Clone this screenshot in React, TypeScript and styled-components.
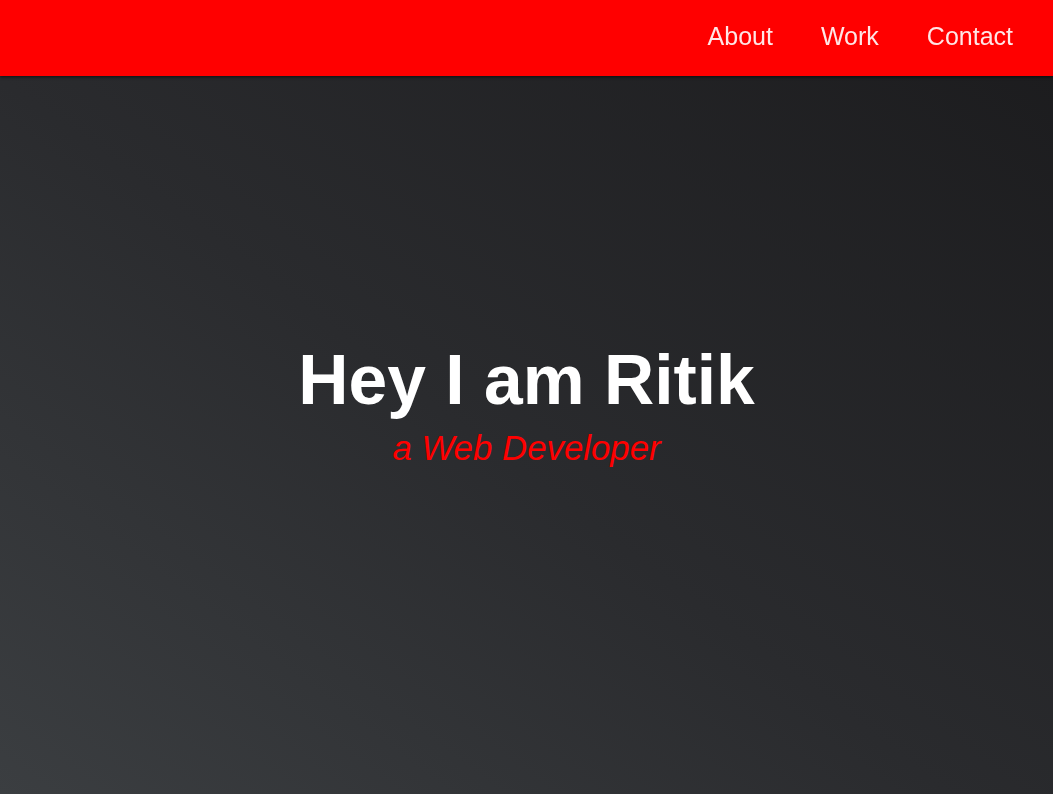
import React from "react";
import styled, { createGlobalStyle } from "styled-components";

const Global = createGlobalStyle`
  * { box-sizing: border-box; }
  html, body { margin: 0; padding: 0; }
  body { font-family: "Liberation Sans", Arial, sans-serif; background: #1b1b1d; }
`;

const Header = styled.header`
  position: fixed;
  top: 0;
  left: 0;
  right: 0;
  height: 76px;
  background: #ff0000;
  box-shadow: 0 1px 3px rgba(0, 0, 0, 0.6);
  display: flex;
  justify-content: flex-end;
  align-items: center;
  padding: 0 40px 4px 0;
  z-index: 10;
`;

const Nav = styled.nav`
  display: flex;
  gap: 48px;
`;

const NavLink = styled.a`
  font-size: 25px;
  color: rgba(255, 255, 255, 0.9);
  text-decoration: none;
  line-height: 1;
`;

const Hero = styled.section`
  height: 100vh;
  padding-top: 14px;
  background: linear-gradient(to top right, #3b3e41, #2a2b2e 45%, #1b1b1d);
  display: flex;
  flex-direction: column;
  align-items: center;
  justify-content: center;
  text-align: center;
`;

const Title = styled.h1`
  margin: 0;
  font-size: 69.6px;
  font-weight: 700;
  color: #ffffff;
  line-height: 1.15;
`;

const Subtitle = styled.p`
  margin: 7px 0 0;
  font-size: 34.8px;
  font-style: italic;
  color: #ff0000;
  line-height: 1.15;
`;

export default function App() {
  return (
    <>
      <Global />
      <Header>
        <Nav>
          <NavLink href="#about">About</NavLink>
          <NavLink href="#work">Work</NavLink>
          <NavLink href="#contact">Contact</NavLink>
        </Nav>
      </Header>
      <Hero>
        <Title>Hey I am Ritik</Title>
        <Subtitle>a Web Developer</Subtitle>
      </Hero>
    </>
  );
}
